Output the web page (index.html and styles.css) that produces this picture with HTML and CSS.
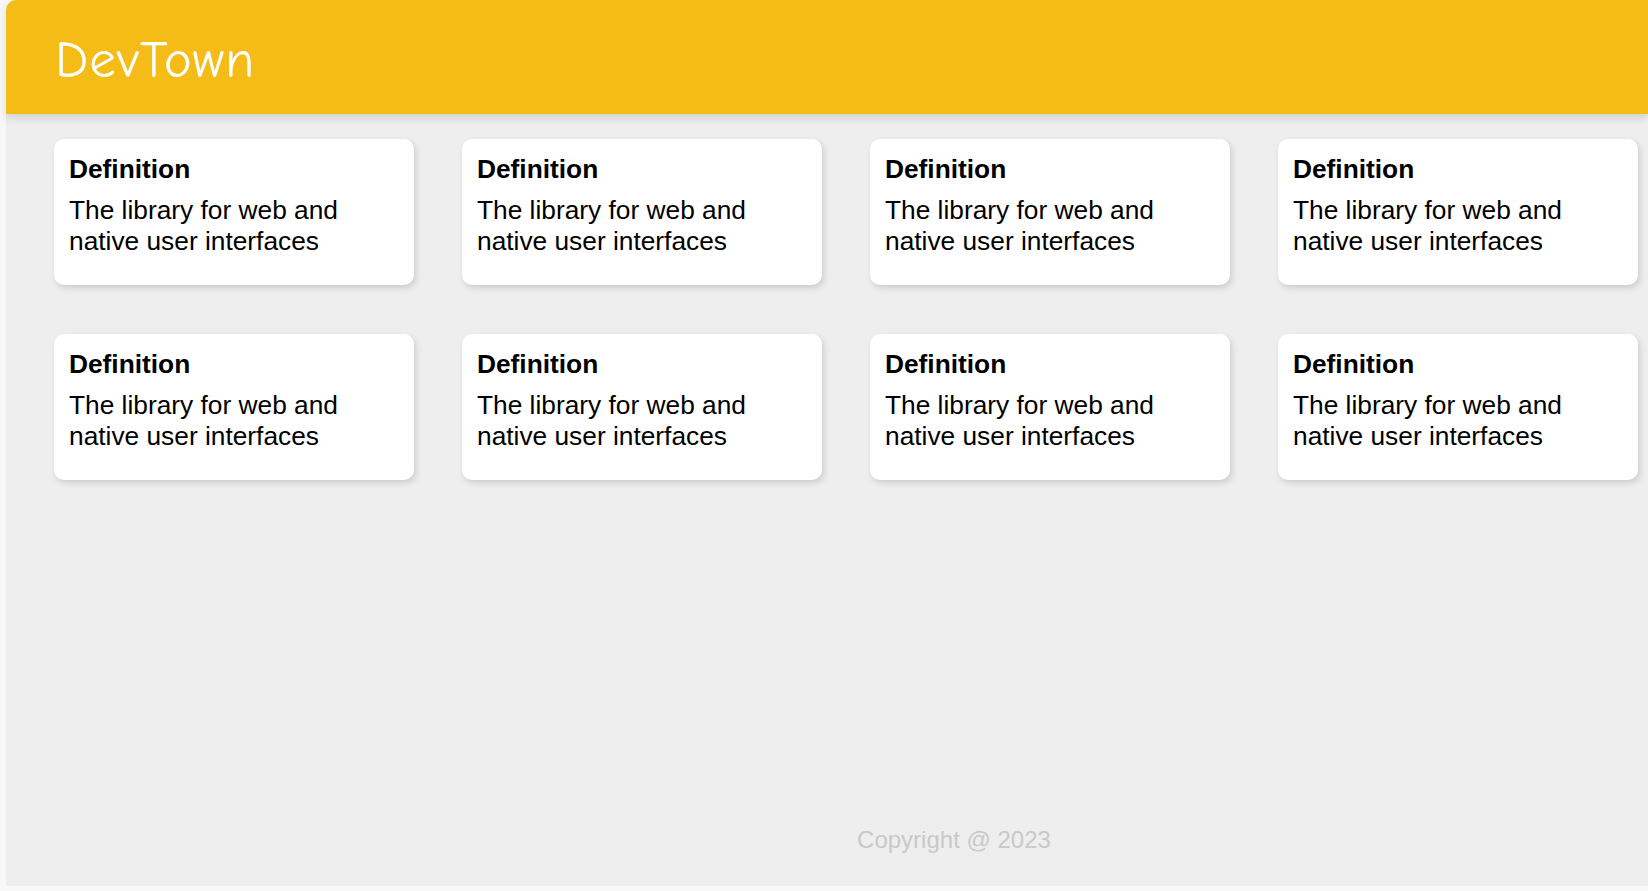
FILE: index.html
```html
<!DOCTYPE html>
<html lang="en">
<head>
<meta charset="utf-8">
<title>DevTown</title>
<link rel="stylesheet" href="styles.css">
</head>
<body>
<div class="app">
  <header class="topbar">
    <h1 class="brand">DevTown</h1>
  </header>
  <main class="grid">
    <div class="card"><h3 class="card-title">Definition</h3><p class="card-text">The library for web and native user interfaces</p></div>
    <div class="card"><h3 class="card-title">Definition</h3><p class="card-text">The library for web and native user interfaces</p></div>
    <div class="card"><h3 class="card-title">Definition</h3><p class="card-text">The library for web and native user interfaces</p></div>
    <div class="card"><h3 class="card-title">Definition</h3><p class="card-text">The library for web and native user interfaces</p></div>
    <div class="card"><h3 class="card-title">Definition</h3><p class="card-text">The library for web and native user interfaces</p></div>
    <div class="card"><h3 class="card-title">Definition</h3><p class="card-text">The library for web and native user interfaces</p></div>
    <div class="card"><h3 class="card-title">Definition</h3><p class="card-text">The library for web and native user interfaces</p></div>
    <div class="card"><h3 class="card-title">Definition</h3><p class="card-text">The library for web and native user interfaces</p></div>
  </main>
  <footer class="footer">Copyright @ 2023</footer>
</div>
</body>
</html>
```

FILE: styles.css
```css
html, body {
  margin: 0;
  padding: 0;
}
body {
  background: #f8f8f8;
  font-family: "Liberation Sans", Arial, sans-serif;
  overflow: hidden;
}
.app {
  margin-left: 6px;
  height: 886px;
  background: #eeeeee;
  border-top-left-radius: 10px;
  display: flex;
  flex-direction: column;
}
.topbar {
  height: 114px;
  flex: 0 0 114px;
  background: #f5bc18;
  border-top-left-radius: 10px;
  box-shadow: 0 4px 8px rgba(0, 0, 0, 0.12);
  display: flex;
  align-items: center;
  padding-left: 49px;
  padding-top: 4px;
  box-sizing: border-box;
  position: relative;
  z-index: 1;
}
.brand {
  margin: 0;
  color: #ffffff;
  font-family: "Comic Sans MS", "Comic Neue", cursive;
  font-weight: normal;
  font-size: 53px;
  letter-spacing: 1px;
}
.grid {
  display: grid;
  grid-template-columns: repeat(4, 360px);
  column-gap: 48px;
  row-gap: 49px;
  padding: 25px 0 0 48px;
}
.card {
  background: #ffffff;
  border-radius: 10px;
  padding: 15px 16px 16px 15px;
  box-shadow: 2px 3px 6px rgba(0, 0, 0, 0.14);
}
.card-title {
  margin: 0 0 11px;
  font-size: 26.3px;
  line-height: 30px;
  font-weight: bold;
  color: #000;
}
.card-text {
  margin: 0 0 12px;
  font-size: 26.3px;
  line-height: 31px;
  color: #000;
}
.footer {
  margin-top: auto;
  padding: 0 0 32px 254px;
  text-align: center;
  font-size: 24px;
  color: #c9c9c9;
}
```
